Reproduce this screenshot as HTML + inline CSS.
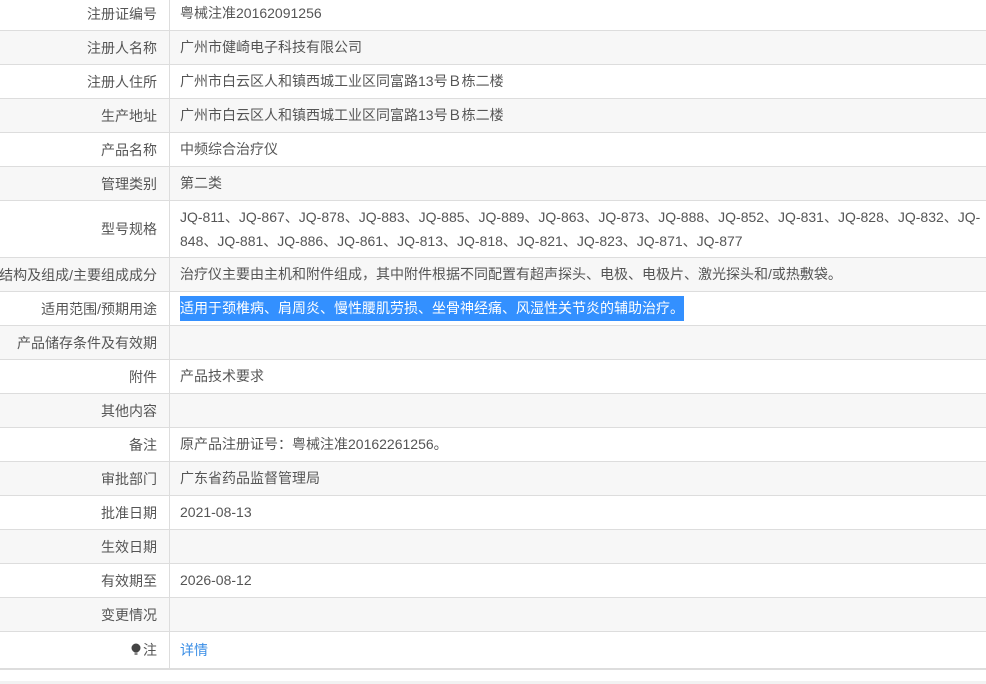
<!DOCTYPE html>
<html><head><meta charset="utf-8"><style>
html,body{margin:0;padding:0;background:#fff;overflow:hidden;width:986px;height:684px}
body{font-family:"Liberation Sans","Noto Sans CJK SC",sans-serif;font-size:14px;color:#555}
.t{position:absolute;left:0;top:-3px;width:1100px}
.r{display:flex;border-bottom:1px solid #ddd;box-sizing:border-box;height:34px}
.r:nth-child(even){background:#f7f7f7}
.l{width:170px;flex:none;border-right:1px solid #ddd;box-sizing:border-box;text-align:right;padding-right:12px;display:flex;align-items:center;justify-content:flex-end;white-space:nowrap;overflow:visible}
.c{padding-left:10px;display:flex;align-items:center;white-space:nowrap;line-height:25px}
.sel{background:#3390ff;color:#fff}
.bot{position:absolute;left:0;top:681px;width:986px;height:3px;background:#f2f2f2}
</style></head><body>
<div class="t">
<div class="r"><div class="l">注册证编号</div><div class="c">粤械注准20162091256</div></div>
<div class="r"><div class="l">注册人名称</div><div class="c">广州市健崎电子科技有限公司</div></div>
<div class="r"><div class="l">注册人住所</div><div class="c">广州市白云区人和镇西城工业区同富路13号Ｂ栋二楼</div></div>
<div class="r"><div class="l">生产地址</div><div class="c">广州市白云区人和镇西城工业区同富路13号Ｂ栋二楼</div></div>
<div class="r"><div class="l">产品名称</div><div class="c">中频综合治疗仪</div></div>
<div class="r"><div class="l">管理类别</div><div class="c">第二类</div></div>
<div class="r" style="height:57px"><div class="l">型号规格</div><div class="c" style="line-height:24px">JQ-811、JQ-867、JQ-878、JQ-883、JQ-885、JQ-889、JQ-863、JQ-873、JQ-888、JQ-852、JQ-831、JQ-828、JQ-832、JQ-<br>848、JQ-881、JQ-886、JQ-861、JQ-813、JQ-818、JQ-821、JQ-823、JQ-871、JQ-877</div></div>
<div class="r"><div class="l">结构及组成/主要组成成分</div><div class="c">治疗仪主要由主机和附件组成，其中附件根据不同配置有超声探头、电极、电极片、激光探头和/或热敷袋。</div></div>
<div class="r"><div class="l">适用范围/预期用途</div><div class="c"><span class="sel">适用于颈椎病、肩周炎、慢性腰肌劳损、坐骨神经痛、风湿性关节炎的辅助治疗。</span></div></div>
<div class="r"><div class="l">产品储存条件及有效期</div><div class="c"></div></div>
<div class="r"><div class="l">附件</div><div class="c">产品技术要求</div></div>
<div class="r"><div class="l">其他内容</div><div class="c"></div></div>
<div class="r"><div class="l">备注</div><div class="c">原产品注册证号：粤械注准20162261256。</div></div>
<div class="r"><div class="l">审批部门</div><div class="c">广东省药品监督管理局</div></div>
<div class="r"><div class="l">批准日期</div><div class="c">2021-08-13</div></div>
<div class="r"><div class="l">生效日期</div><div class="c"></div></div>
<div class="r"><div class="l">有效期至</div><div class="c">2026-08-12</div></div>
<div class="r"><div class="l">变更情况</div><div class="c"></div></div>
<div class="r" style="height:38px;border-bottom:2px solid #ddd"><div class="l"><svg width="10" height="14" viewBox="0 0 10 14" style="margin-right:2px"><circle cx="5" cy="5" r="4.5" fill="#444"/><rect x="3.5" y="9" width="3" height="3" fill="#888"/></svg>注</div><div class="c" style="color:#3a8ee6">详情</div></div>
</div>
<div class="bot"></div>
</body></html>
